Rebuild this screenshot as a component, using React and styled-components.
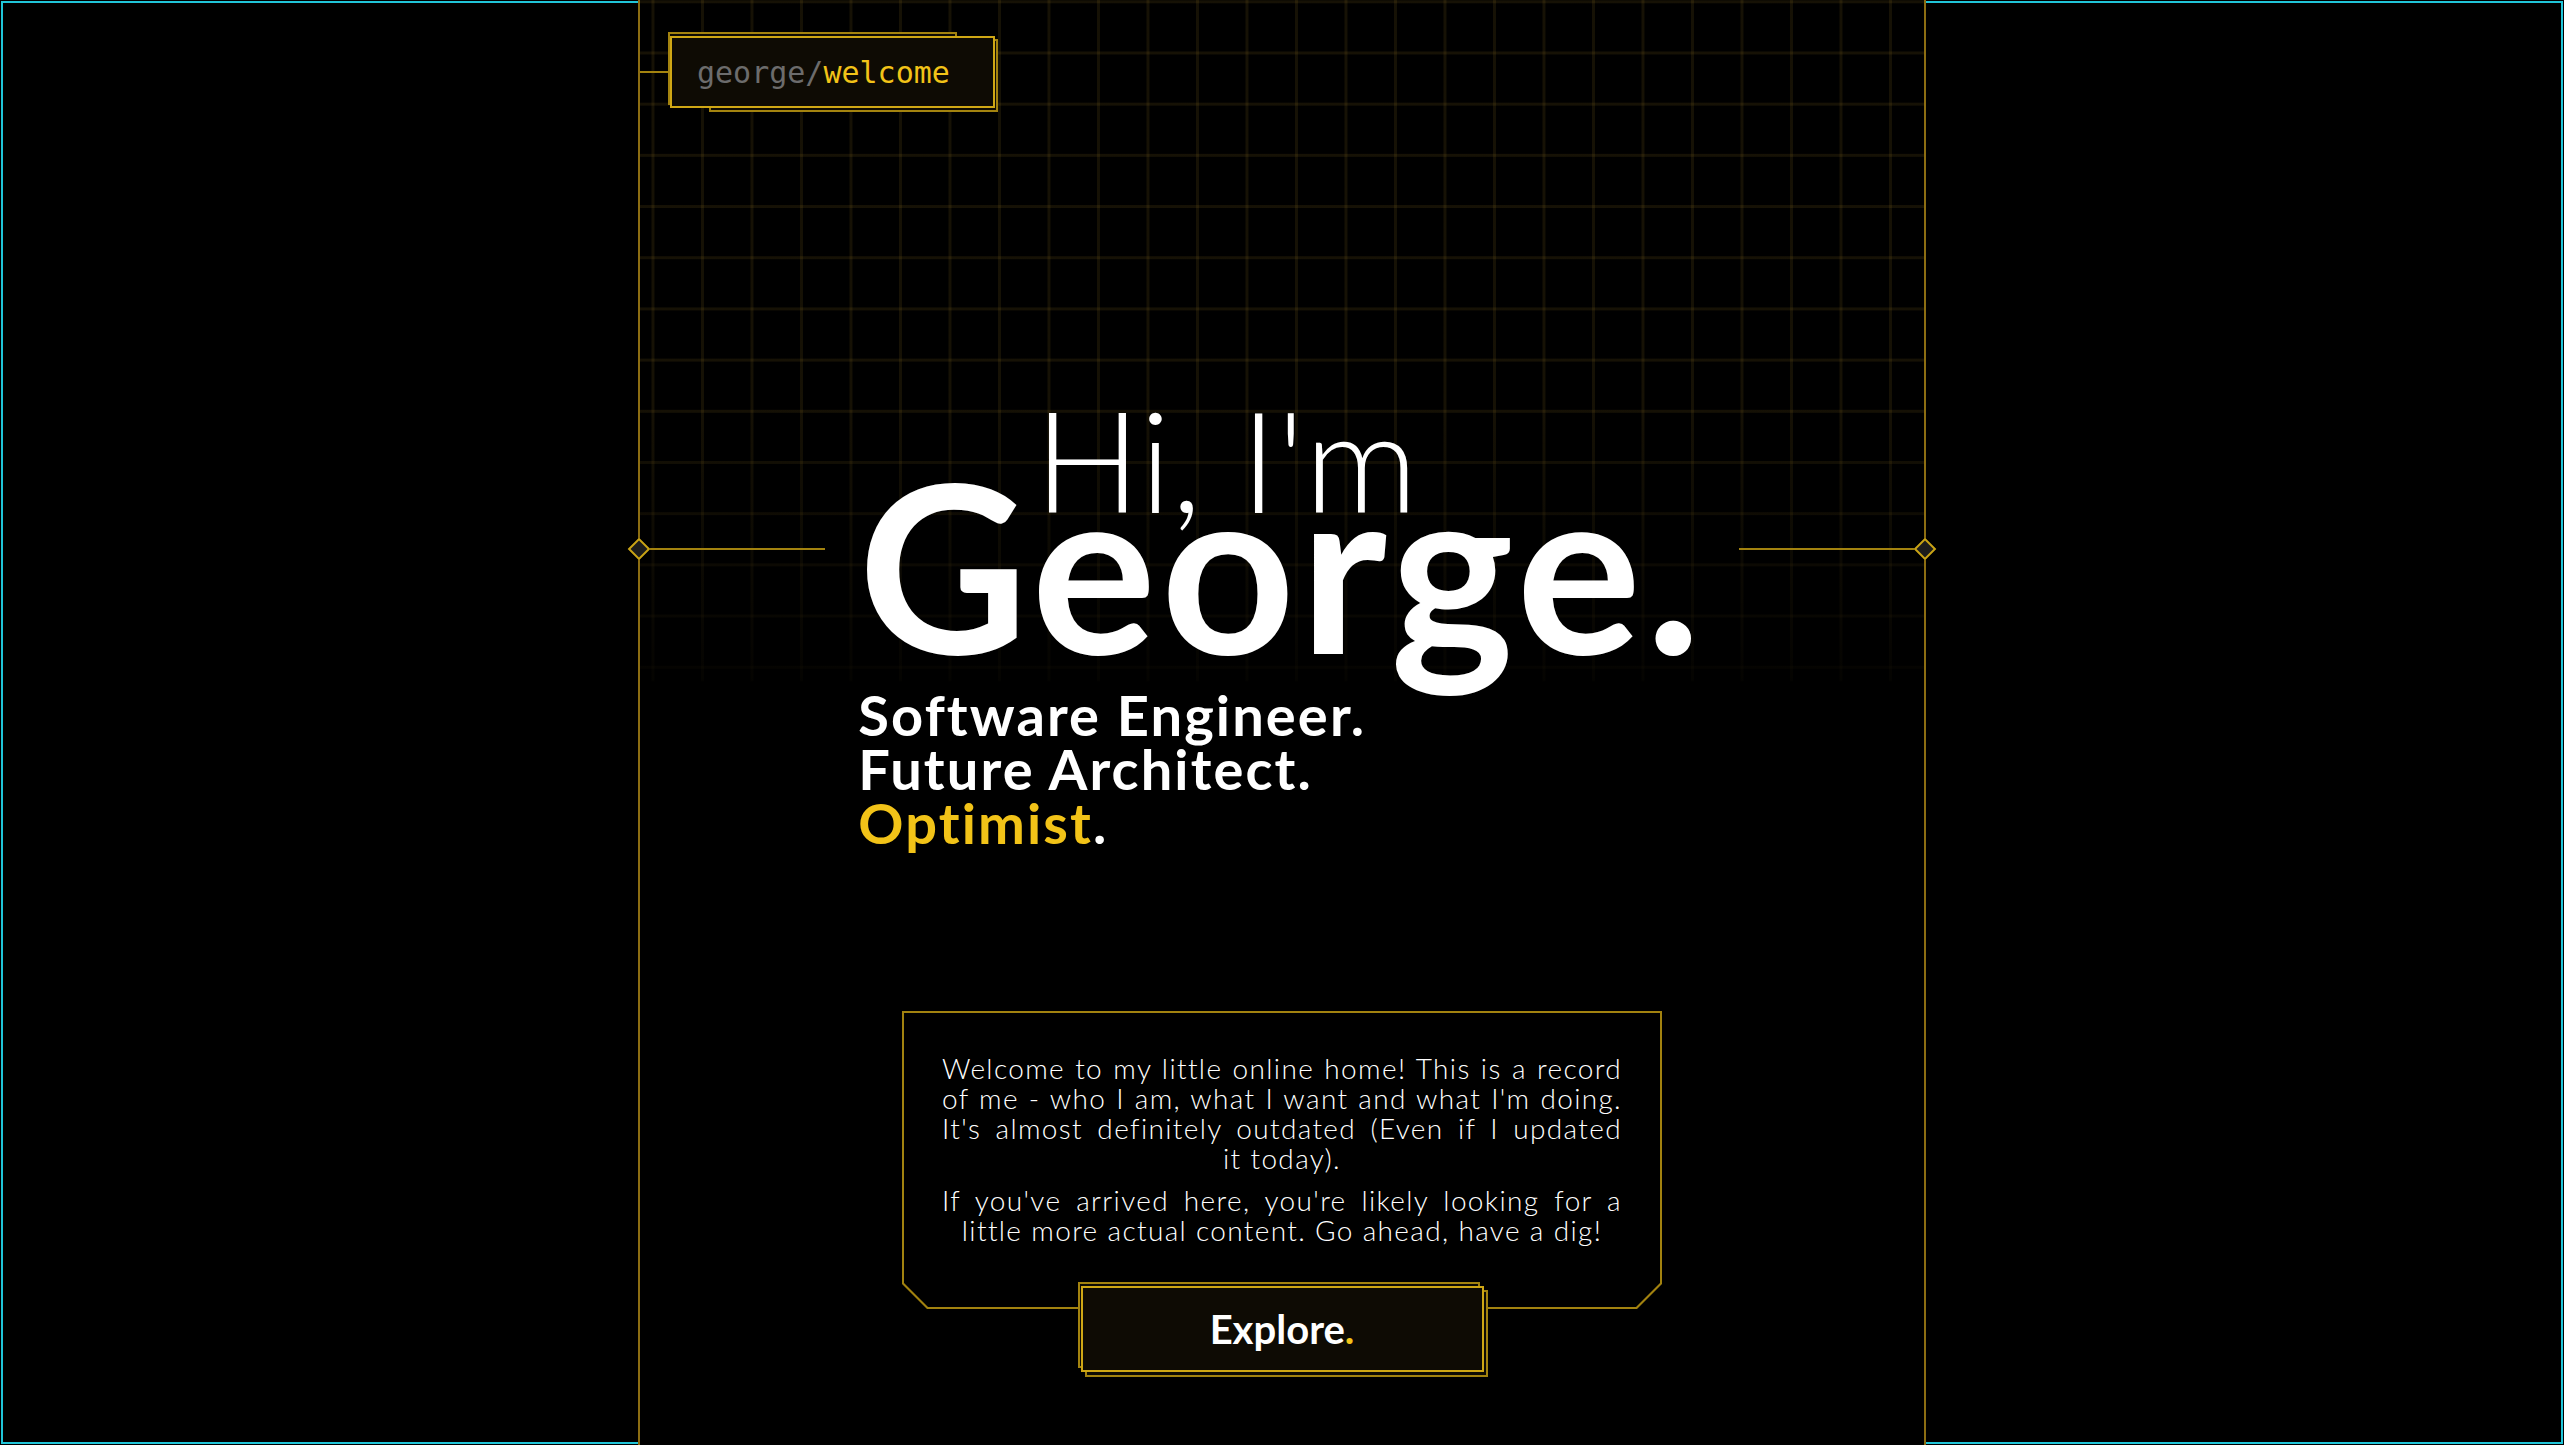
import React from "react";
import styled, { createGlobalStyle } from "styled-components";

const gold = "#f2c318";
const rule = "#8c6d12";
const frameGold = "#cfa715";
const dimGold = "#a3830f";
const panel = "#0e0b04";
const gridLine = "rgba(170, 135, 40, 0.13)";

const GlobalStyle = createGlobalStyle`
  html, body {
    margin: 0;
    padding: 0;
    background: #000;
  }
  body {
    font-family: "Lato", "Noto Sans", sans-serif;
    color: #fff;
  }
  * {
    box-sizing: border-box;
  }
`;

const Page = styled.div`
  height: 100vh;
  overflow: hidden;
  background: #000;
  outline: 2px solid #20c5d8;
  outline-offset: -3px;
`;

const Column = styled.main`
  position: relative;
  width: 1288px;
  height: 100%;
  margin: 0 auto;
  border-left: 2px solid ${rule};
  border-right: 2px solid ${rule};
  background:
    linear-gradient(to bottom, rgba(0, 0, 0, 0) 400px, rgba(0, 0, 0, 0.8) 680px, #000 682px),
    linear-gradient(to right, ${gridLine} 3px, transparent 3px),
    linear-gradient(to bottom, ${gridLine} 3px, transparent 3px),
    #000;
  background-size: 100% 100%, 49.5px 51.2px, 49.5px 51.2px;
  background-position: 0 0, 11.5px 51.5px, 11.5px 51.5px;
`;

const Marker = styled.div`
  position: absolute;
  top: 538px;
  display: flex;
  align-items: center;
  pointer-events: none;
  ${(p) => (p.$side === "left" ? "left: -12px;" : "right: -12px; flex-direction: row-reverse;")}
`;

const Diamond = styled.span`
  flex: none;
  width: 16px;
  height: 16px;
  margin: 3px;
  transform: rotate(45deg);
  background: #1c1c1c;
  border: 2px solid #c9a314;
`;

const MarkerLine = styled.span`
  width: 175px;
  height: 2px;
  background: ${dimGold};
`;

const Header = styled.header`
  display: flex;
  align-items: center;
  padding-top: 36px;
`;

const Connector = styled.span`
  width: 30px;
  height: 2px;
  background: ${dimGold};
`;

const TagFrame = styled.div`
  position: relative;

  &::before,
  &::after {
    content: "";
    position: absolute;
    border: 2px solid ${dimGold};
    background: ${panel};
  }
  &::before {
    top: -4px;
    left: -2px;
    right: 38px;
    bottom: 3px;
  }
  &::after {
    top: 3px;
    left: 39px;
    right: -3px;
    bottom: -4px;
  }
`;

const TagFace = styled.div`
  position: relative;
  z-index: 1;
  display: flex;
  align-items: center;
  width: 325px;
  height: 72px;
  padding-left: 25px;
  border: 2px solid ${frameGold};
  background: ${panel};
  font-family: "DejaVu Sans Mono", "Liberation Mono", monospace;
  font-size: 30px;
`;

const Path = styled.span`
  color: ${(p) => (p.$active ? gold : "#6c6c6c")};
`;

const Hero = styled.section`
  display: flex;
  justify-content: center;
  padding-top: 280px;
`;

const Heading = styled.h1`
  display: flex;
  flex-direction: column;
  align-items: flex-start;
  margin: 0;
  font-weight: 700;
`;

const Greeting = styled.span`
  padding-left: 176px;
  font-size: 141px;
  font-weight: 300;
  line-height: 1;
  letter-spacing: 0;
`;

const Name = styled.span`
  margin-top: -82px;
  font-size: 234px;
  font-weight: 700;
  line-height: 1;
  letter-spacing: 4.5px;
`;

const Roles = styled.div`
  display: flex;
  flex-direction: column;
  margin-top: 7px;
`;

const Role = styled.span`
  font-size: 56px;
  font-weight: 700;
  line-height: 54px;
  letter-spacing: 2.1px;
  color: ${(p) => (p.$highlight ? gold : "#fff")};
`;

const Dot = styled.span`
  color: ${(p) => (p.$gold ? gold : "#fff")};
`;

const Intro = styled.section`
  display: flex;
  flex-direction: column;
  align-items: center;
  margin-top: 161px;
`;

const IntroFrame = styled.div`
  width: 760px;
  padding: 2px;
  background: #a2820f;
  clip-path: polygon(0 0, 100% 0, 100% calc(100% - 25px), calc(100% - 25px) 100%, 25px 100%, 0 calc(100% - 25px));
`;

const IntroBody = styled.div`
  padding: 40px 38px 62px;
  background: #000;
  clip-path: polygon(0 0, 100% 0, 100% calc(100% - 24px), calc(100% - 24px) 100%, 24px 100%, 0 calc(100% - 24px));
`;

const Para = styled.p`
  margin: 0;
  font-size: 28px;
  font-weight: 300;
  line-height: 30px;
  letter-spacing: 1.35px;
  text-align: justify;
  text-align-last: center;

  & + & {
    margin-top: 12px;
  }
`;

const ExploreFrame = styled.div`
  position: relative;
  margin-top: -23px;

  &::before,
  &::after {
    content: "";
    position: absolute;
    border: 2px solid ${dimGold};
    background: ${panel};
  }
  &::before {
    top: -4px;
    left: -3px;
    right: 4px;
    bottom: 4px;
  }
  &::after {
    top: 4px;
    left: 4px;
    right: -4px;
    bottom: -5px;
  }
`;

const ExploreButton = styled.button`
  position: relative;
  z-index: 1;
  display: flex;
  align-items: center;
  justify-content: center;
  width: 403px;
  height: 86px;
  border: 2px solid ${frameGold};
  background: ${panel};
  color: #fff;
  font-family: "Lato", "Noto Sans", sans-serif;
  font-size: 40px;
  font-weight: 700;
  cursor: pointer;
`;

export default function App() {
  return (
    <Page>
      <GlobalStyle />
      <Column>
        <Marker $side="left">
          <Diamond />
          <MarkerLine />
        </Marker>
        <Marker $side="right">
          <Diamond />
          <MarkerLine />
        </Marker>

        <Header>
          <Connector />
          <TagFrame>
            <TagFace>
              <Path>george/</Path>
              <Path $active>welcome</Path>
            </TagFace>
          </TagFrame>
        </Header>

        <Hero>
          <Heading>
            <Greeting>Hi, I'm</Greeting>
            <Name>George.</Name>
            <Roles>
              <Role>Software Engineer.</Role>
              <Role>Future Architect.</Role>
              <Role $highlight>
                Optimist<Dot>.</Dot>
              </Role>
            </Roles>
          </Heading>
        </Hero>

        <Intro>
          <IntroFrame>
            <IntroBody>
              <Para>
                Welcome to my little online home! This is a record of me - who I am, what I want and what
                I'm doing. It's almost definitely outdated (Even if I updated it{"\u00a0"}today).
              </Para>
              <Para>
                If you've arrived here, you're likely looking for a little more actual content. Go ahead,
                have a dig!
              </Para>
            </IntroBody>
          </IntroFrame>
          <ExploreFrame>
            <ExploreButton>
              Explore<Dot $gold>.</Dot>
            </ExploreButton>
          </ExploreFrame>
        </Intro>
      </Column>
    </Page>
  );
}
